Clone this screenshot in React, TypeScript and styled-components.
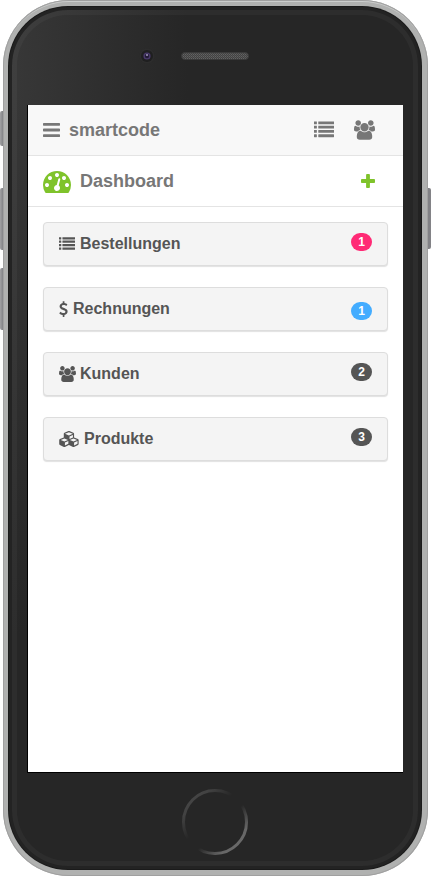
import React from "react";
import styled, { createGlobalStyle } from "styled-components";

const GlobalStyle = createGlobalStyle`
  *, *::before, *::after { box-sizing: border-box; }
  body {
    margin: 0;
    background: #fff;
    font-family: "Liberation Sans", Helvetica, Arial, sans-serif;
  }
`;

const Stage = styled.main`
  position: relative;
  display: flex;
  min-height: 100vh;
  padding: 0 3px 1px;
`;

const SideButton = styled.span<{ $side: "left" | "right"; $top: number; $height: number }>`
  position: absolute;
  ${(p) => p.$side}: 0;
  top: ${(p) => p.$top}px;
  width: 4px;
  height: ${(p) => p.$height}px;
  background: ${(p) => (p.$side === "left" ? "linear-gradient(90deg, #a2a2a4, #77787c)" : "#828286")};
  border-radius: ${(p) => (p.$side === "left" ? "2px 0 0 2px" : "0 2px 2px 0")};
`;

const Frame = styled.div`
  position: relative;
  display: flex;
  flex: 1;
  padding: 6px 6px 6px 5px;
  border-radius: 66px;
  background: #b0b1b0;
  box-shadow: inset 0 0 0 1px #a0a0a0, inset 0 2px 0 #cbcdcc;
`;

const Bezel = styled.div`
  display: flex;
  flex: 1;
  flex-direction: column;
  min-width: 0;
  padding: 0 19px 0 19px;
  border-radius: 60px;
  background: radial-gradient(ellipse 180px 560px at 0 70px, #383838, #2e2e2e 55%, #262626 100%) #262626;
  box-shadow: inset 0 0 0 1px #1b1b1b, inset 0 0 0 4px #232323, inset 0 0 0 9px rgba(255, 255, 255, 0.035);
`;

const Forehead = styled.div`
  display: grid;
  grid-template-columns: 1fr 68px 1fr;
  align-items: center;
  height: 99px;
`;

const Camera = styled.svg`
  display: block;
  width: 16px;
  height: 16px;
  margin-right: 26px;
  justify-self: end;
`;

const Speaker = styled.svg`
  display: block;
  width: 68px;
  height: 8px;
`;

const Chin = styled.div`
  display: flex;
  align-items: center;
  justify-content: center;
  height: 97px;
`;

const HomeButton = styled.button`
  width: 66px;
  height: 66px;
  padding: 0;
  border: 0;
  border-radius: 50%;
  background: none;

  svg { display: block; }
`;

const Screen = styled.div`
  flex: 1;
  border: solid #000;
  border-width: 0 0 1px 1px;
  background: #fff;
`;

const Bar = styled.header<{ $shaded?: boolean }>`
  display: flex;
  align-items: center;
  justify-content: space-between;
  height: 51px;
  padding: 0 28px 0 15px;
  border-bottom: 1px solid #e4e4e4;
  background: ${(p) => (p.$shaded ? "#f8f8f8" : "#fff")};
  color: #777;
`;

const BarTitle = styled.div`
  display: flex;
  align-items: center;
  gap: 9px;
`;

const Heading = styled.h1`
  margin: 0;
  font-size: 18px;
  line-height: 20px;
  font-weight: bold;
`;

const Actions = styled.div`
  display: flex;
  align-items: center;
  gap: 20px;
`;

const IconButton = styled.button<{ $color?: string }>`
  display: flex;
  padding: 0;
  border: 0;
  background: none;
  color: ${(p) => p.$color ?? "#777"};
`;

const Glyph = styled.svg`
  display: block;
  flex: none;
  fill: currentColor;
`;

const PanelList = styled.nav`
  display: flex;
  flex-direction: column;
  gap: 21px;
  padding: 15px;
`;

const Panel = styled.a`
  display: flex;
  align-items: center;
  height: 44px;
  padding: 0 15px;
  border: 1px solid #ddd;
  border-radius: 4px;
  background: #f4f4f4;
  box-shadow: 0 1px 1px rgba(0, 0, 0, 0.12);
  color: #555;
  font-size: 16px;
  font-weight: bold;
  line-height: 18px;
  text-decoration: none;
`;

const PanelLabel = styled.span<{ $gap: number }>`
  flex: 1;
  margin-left: ${(p) => p.$gap}px;
`;

const Badge = styled.span<{ $color: string; $low?: boolean }>`
  align-self: flex-start;
  min-width: 21px;
  height: 18px;
  margin-top: ${(p) => (p.$low ? 14 : 10)}px;
  border-radius: 9px;
  background: ${(p) => p.$color};
  color: #fff;
  font-size: 12px;
  line-height: 18px;
  text-align: center;
`;

const shapes = {
  bars: {
    width: 1536,
    d: "M1536 1344v128q0 26-19 45t-45 19h-1408q-26 0-45-19t-19-45v-128q0-26 19-45t45-19h1408q26 0 45 19t19 45zm0-512v128q0 26-19 45t-45 19h-1408q-26 0-45-19t-19-45v-128q0-26 19-45t45-19h1408q26 0 45 19t19 45zm0-512v128q0 26-19 45t-45 19h-1408q-26 0-45-19t-19-45v-128q0-26 19-45t45-19h1408q26 0 45 19t19 45z",
  },
  list: {
    width: 1792,
    d: [1280, 896, 512, 128]
      .map(
        (y) =>
          `M256 ${y + 32}v192q0 13-9.5 22.5t-22.5 9.5h-192q-13 0-22.5-9.5t-9.5-22.5v-192q0-13 9.5-22.5t22.5-9.5h192q13 0 22.5 9.5t9.5 22.5z` +
          `M1792 ${y + 32}v192q0 13-9.5 22.5t-22.5 9.5h-1344q-13 0-22.5-9.5t-9.5-22.5v-192q0-13 9.5-22.5t22.5-9.5h1344q13 0 22.5 9.5t9.5 22.5z`
      )
      .join(""),
  },
  users: {
    width: 1920,
    d: "M593 896q-162 5-265 128h-134q-82 0-138-40.5t-56-118.5q0-353 124-353 6 0 43.5 21t97.5 42.5 119 21.5q67 0 133-23-5 37-5 66 0 159 81 256zm1071 637q0 120-73 189.5t-194 69.5h-874q-121 0-194-69.5t-73-189.5q0-53 3.5-103.5t14-109 26.5-108.5 43-97.5 62-81 85.5-53.5 111.5-20q10 0 43 21.5t73 48 107 48 135 21.5 135-21.5 107-48 73-48 43-21.5q61 0 111.5 20t85.5 53.5 62 81 43 97.5 26.5 108.5 14 109 3.5 103.5zm-1024-1277q0 106-75 181t-181 75-181-75-75-181 75-181 181-75 181 75 75 181zm704 384q0 159-112.5 271.5t-271.5 112.5-271.5-112.5-112.5-271.5 112.5-271.5 271.5-112.5 271.5 112.5 112.5 271.5zm576 225q0 78-56 118.5t-138 40.5h-134q-103-123-265-128 81-97 81-256 0-29-5-66 66 23 133 23 59 0 119-21.5t97.5-42.5 43.5-21q124 0 124 353zm-128-609q0 106-75 181t-181 75-181-75-75-181 75-181 181-75 181 75 75 181z",
  },
  gauge: {
    width: 1792,
    d: "M384 1152q0-53-37.5-90.5t-90.5-37.5-90.5 37.5-37.5 90.5 37.5 90.5 90.5 37.5 90.5-37.5 37.5-90.5zm192-448q0-53-37.5-90.5t-90.5-37.5-90.5 37.5-37.5 90.5 37.5 90.5 90.5 37.5 90.5-37.5 37.5-90.5zm428 481l101-382q6-26-7.5-48.5t-38.5-29.5-48 6.5-30 39.5l-101 382q-60 5-107 43.5t-63 98.5q-20 77 20 146t117 89 146-20 89-117q16-60-6-117t-72-91zm660-33q0-53-37.5-90.5t-90.5-37.5-90.5 37.5-37.5 90.5 37.5 90.5 90.5 37.5 90.5-37.5 37.5-90.5zm-640-640q0-53-37.5-90.5t-90.5-37.5-90.5 37.5-37.5 90.5 37.5 90.5 90.5 37.5 90.5-37.5 37.5-90.5zm448 192q0-53-37.5-90.5t-90.5-37.5-90.5 37.5-37.5 90.5 37.5 90.5 90.5 37.5 90.5-37.5 37.5-90.5zm320 448q0 261-141 483-19 29-54 29h-1402q-35 0-54-29-141-221-141-483 0-182 71-348t191-286 286-191 348-71 348 71 286 191 191 286 71 348z",
  },
  plus: {
    width: 1408,
    d: "M1408 800v192q0 40-28 68t-68 28h-416v416q0 40-28 68t-68 28h-192q-40 0-68-28t-28-68v-416h-416q-40 0-68-28t-28-68v-192q0-40 28-68t68-28h416v-416q0-40 28-68t68-28h192q40 0 68 28t28 68v416h416q40 0 68 28t28 68z",
  },
  dollar: {
    width: 1024,
    left: 384,
    d: "M1362 1185q0 153-99.5 263.5t-258.5 136.5v175q0 14-9 23t-23 9h-135q-13 0-22.5-9.5t-9.5-22.5v-175q-66-9-127.5-31t-101.5-44.5-74-48-46.5-37.5-17.5-18q-17-21-2-41l103-135q7-10 23-12 15-2 24 9l2 2q113 99 243 125 37 8 74 8 81 0 142.5-43t61.5-122q0-28-15-53t-33.5-42-58.5-37.5-66-32-80-32.5q-39-16-61.5-25t-61.5-26.5-62.5-31-56.5-35.5-53.5-42.5-43.5-49-35.5-58-21-66.5-8.5-78q0-138 98-242t255-134v-180q0-13 9.5-22.5t22.5-9.5h135q14 0 23 9t9 23v176q57 6 110.5 23t87 33.5 63.5 37.5 39 29 15 14q17 18 5 38l-81 146q-8 15-23 16-14 3-27-7-3-3-14.5-12t-39-26.5-58.5-32-74.5-26-85.5-11.5q-95 0-155 43t-60 111q0 26 8.5 48t29.5 41.5 39.5 33 56 31 60.5 27 70 27.5q53 20 81 31.5t76 35 75.5 42.5 62 50 53 63.5 31.5 76.5 13 94z",
  },
  cubes: {
    width: 2304,
    d: "M640 1632l384-192v-314l-384 164v342zm-64-454l404-173-404-173-404 173zm1088 454l384-192v-314l-384 164v342zm-64-454l404-173-404-173-404 173zm-448-293l384-165v-266l-384 164v267zm-64-379l441-189-441-189-441 189zm1088 518v416q0 36-19 67t-52 47l-448 224q-25 14-57 14t-57-14l-448-224q-4-2-7-4-2 2-7 4l-448 224q-25 14-57 14t-57-14l-448-224q-33-16-52-47t-19-67v-416q0-38 21.5-70t56.5-48l434-186v-400q0-38 21.5-70t56.5-48l448-192q23-10 50-10t50 10l448 192q35 16 56.5 48t21.5 70v400l434 186q36 16 57 48t21 70z",
  },
};

type Shape = { width: number; left?: number; d: string };
type IconName = keyof typeof shapes;

function Icon({ name, size }: { name: IconName; size: number }) {
  const shape: Shape = shapes[name];
  return (
    <Glyph
      width={Math.round((shape.width / 1792) * size)}
      height={size}
      viewBox={`${shape.left ?? 0} 0 ${shape.width} 1792`}
      aria-hidden="true"
    >
      <path d={shape.d} />
    </Glyph>
  );
}

const panels: { icon: IconName; label: string; count: number; color: string; gap: number; low?: boolean }[] = [
  { icon: "list", label: "Bestellungen", count: 1, color: "#ff2a75", gap: 5 },
  { icon: "dollar", label: "Rechnungen", count: 1, color: "#43acff", gap: 5, low: true },
  { icon: "users", label: "Kunden", count: 2, color: "#555", gap: 4 },
  { icon: "cubes", label: "Produkte", count: 3, color: "#555", gap: 4 },
];

export default function App() {
  return (
    <Stage>
      <GlobalStyle />
      <SideButton $side="left" $top={111} $height={35} />
      <SideButton $side="left" $top={188} $height={62} />
      <SideButton $side="left" $top={268} $height={62} />
      <SideButton $side="right" $top={188} $height={61} />
      <Frame>
        <Bezel>
          <Forehead>
            <Camera viewBox="0 0 16 16" aria-hidden="true">
              <circle cx="8" cy="8" r="7.5" fill="#2d2d2d" />
              <circle cx="8" cy="8" r="6" fill="#1f1f20" />
              <circle cx="8" cy="8" r="3.6" fill="#49396b" />
              <circle cx="8" cy="8" r="2.2" fill="#231b36" />
              <circle cx="8" cy="7" r="1.1" fill="#9c93b4" />
            </Camera>
            <Speaker viewBox="0 0 68 8" aria-hidden="true">
              <defs>
                <pattern id="mesh" width="2" height="2" patternUnits="userSpaceOnUse">
                  <rect width="2" height="2" fill="#424242" />
                  <rect width="1" height="1" fill="#636363" />
                  <rect x="1" y="1" width="1" height="1" fill="#565656" />
                </pattern>
              </defs>
              <rect x="0.5" y="0.5" width="67" height="7" rx="3.5" fill="url(#mesh)" stroke="#3a3a3a" />
            </Speaker>
          </Forehead>
          <Screen>
            <Bar $shaded>
              <BarTitle>
                <IconButton aria-label="Menu">
                  <Icon name="bars" size={20} />
                </IconButton>
                <Heading>smartcode</Heading>
              </BarTitle>
              <Actions>
                <IconButton aria-label="Bestellungen">
                  <Icon name="list" size={20} />
                </IconButton>
                <IconButton aria-label="Kunden">
                  <Icon name="users" size={20} />
                </IconButton>
              </Actions>
            </Bar>
            <Bar as="div">
              <BarTitle>
                <IconButton as="span" $color="#7fc32b">
                  <Icon name="gauge" size={28} />
                </IconButton>
                <Heading as="h2">Dashboard</Heading>
              </BarTitle>
              <IconButton $color="#7fc32b" aria-label="Neu">
                <Icon name="plus" size={18} />
              </IconButton>
            </Bar>
            <PanelList>
              {panels.map((p) => (
                <Panel key={p.label} href={`#${p.label}`}>
                  <Icon name={p.icon} size={16} />
                  <PanelLabel $gap={p.gap}>{p.label}</PanelLabel>
                  <Badge $color={p.color} $low={p.low}>
                    {p.count}
                  </Badge>
                </Panel>
              ))}
            </PanelList>
          </Screen>
          <Chin>
            <HomeButton aria-label="Home">
              <svg width="66" height="66" viewBox="0 0 66 66" aria-hidden="true">
                <defs>
                  <linearGradient id="ring" x1="0" y1="0" x2="1" y2="1">
                    <stop offset="0" stopColor="#4a4a4a" />
                    <stop offset="0.2" stopColor="#424242" />
                    <stop offset="0.42" stopColor="#262626" />
                    <stop offset="0.58" stopColor="#262626" />
                    <stop offset="0.8" stopColor="#666" />
                    <stop offset="1" stopColor="#707070" />
                  </linearGradient>
                </defs>
                <circle cx="33" cy="33" r="31.5" fill="none" stroke="url(#ring)" strokeWidth="3" />
              </svg>
            </HomeButton>
          </Chin>
        </Bezel>
      </Frame>
    </Stage>
  );
}
